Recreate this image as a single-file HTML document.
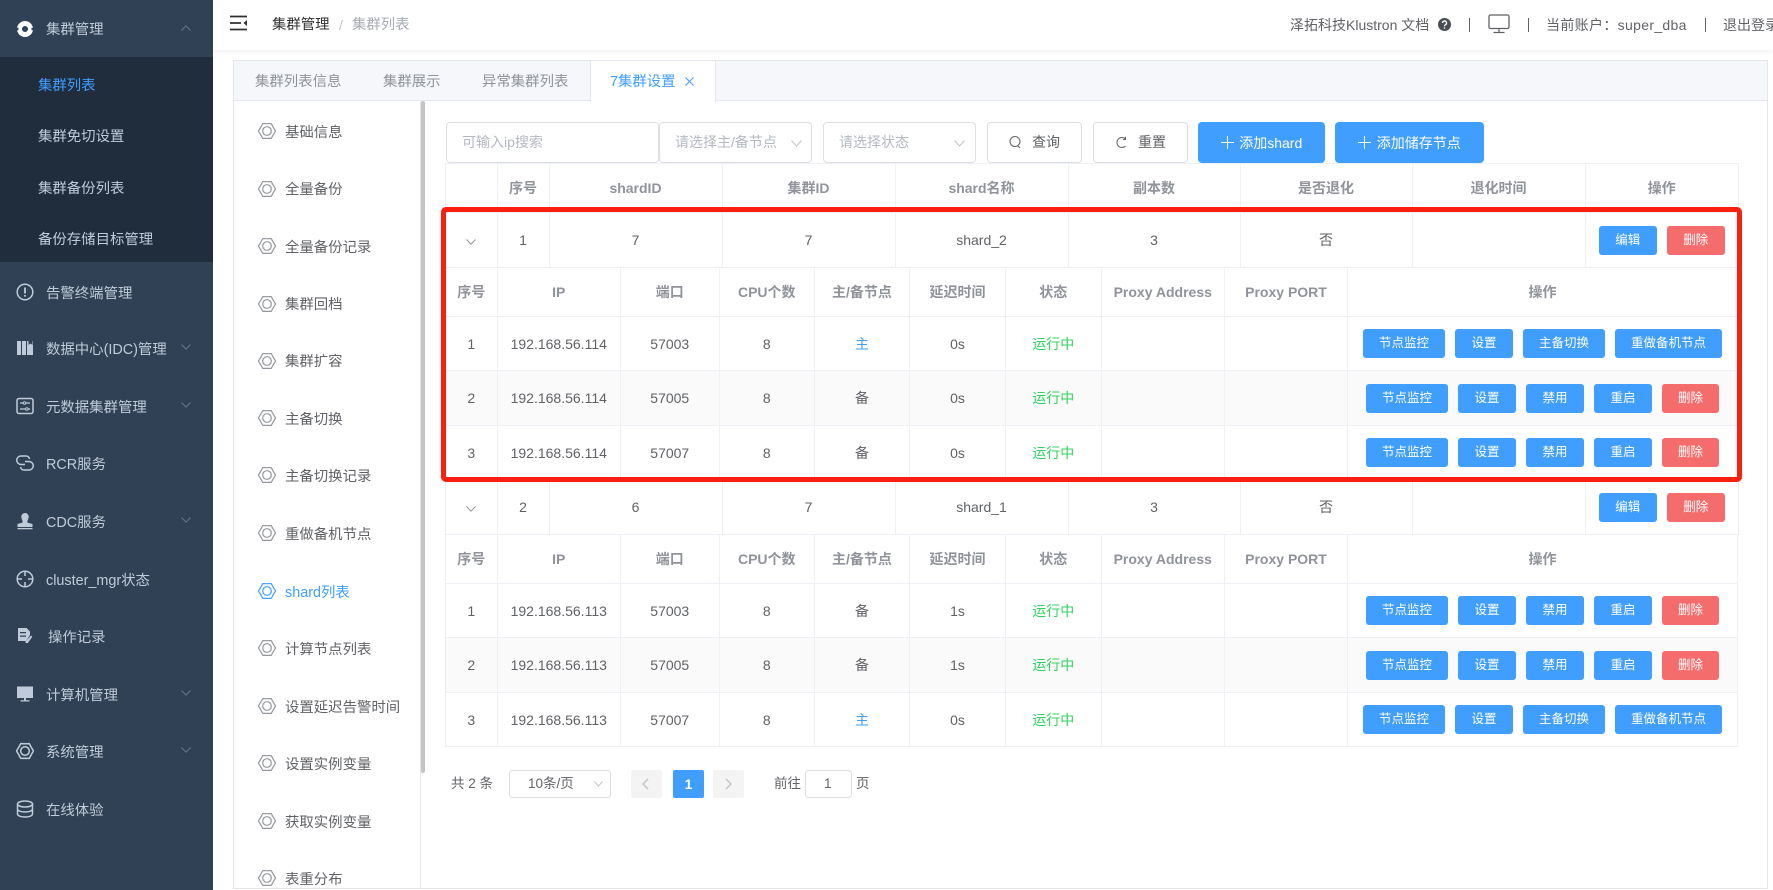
<!DOCTYPE html>
<html lang="zh-CN"><head><meta charset="utf-8"><title>集群列表</title>
<style>
*{box-sizing:border-box}
html{margin:0;padding:0;width:1773px;height:890px;overflow:hidden;background:#fff}
body{margin:0;padding:0;width:1773px;height:890px;overflow:hidden;background:#fff;font-family:"Liberation Sans","Noto Sans CJK SC",sans-serif;color:#606266;filter:blur(.3px)}
.t{position:absolute;white-space:nowrap;line-height:20px;height:20px}
.side{position:absolute;left:0;top:0;width:213px;height:890px;background:#304156}
.sub{position:absolute;left:0;top:57px;width:213px;height:205px;background:#1f2d3d}
.m{color:#bfcbd9;font-size:14.4px;left:46px;margin-top:1.5px}
.s{color:#bfcbd9;font-size:14.4px;left:38px;margin-top:1.5px}
.ic{position:absolute;left:16px;width:18px;height:18px;fill:none;stroke:#bfcbd9;stroke-width:1.5}
.ch{position:absolute;left:181px;width:10px;height:6px;fill:none;stroke:#66778c;stroke-width:1}
.head{position:absolute;left:213px;top:0;width:1560px;height:50px;background:#fff;box-shadow:0 1px 5px rgba(0,21,41,.07)}
.card{position:absolute;left:233px;top:60px;width:1535px;height:829px;border:1px solid #e4e7ed;background:#fff}
.tabbar{position:absolute;left:234px;top:61px;width:1533px;height:40px;background:#f5f7fa;border-bottom:1px solid #e4e7ed}
.tab{font-size:14.4px;color:#909399;top:72px}
.active{position:absolute;left:590px;top:61px;width:126px;height:41px;background:#fff;border-left:1px solid #e4e7ed;border-right:1px solid #e4e7ed}
.l{font-size:14.4px;color:#606266;left:285px;margin-top:1.5px}
.g{position:absolute;left:258px;width:18px;height:18px;fill:none;stroke:#93969c;stroke-width:1.2}
.box{position:absolute;top:122px;height:41px;border:1px solid #dcdfe6;border-radius:4px;background:#fff}
.ph{font-size:14px;color:#b4b8c0;top:132px}
.pb{position:absolute;top:122px;height:41px;border-radius:4px;background:#409eff;color:#fff;font-size:14px;display:flex;align-items:center;justify-content:center;gap:5.5px}
table{position:absolute;left:445px;width:1293px;table-layout:fixed;border-collapse:collapse;font-size:14px;color:#606266;background:#fff}
td{border:1px solid #eef0f5;text-align:center;padding:0;overflow:hidden;white-space:nowrap}
tr.h td{color:#909399;font-weight:bold}
tr.z td{background:#fafafa}
.bs{display:flex;justify-content:center;gap:10px}
.b{height:29px;border-radius:3px;background:#409eff;color:#fff;font-size:12.5px;line-height:29px;text-align:center;width:58px}
.w82{width:82px}.w107{width:107px}.r{background:#f56c6c;width:57px}
.ok{color:#2fd35f}.mas{color:#409eff}
.red{position:absolute;left:440.5px;top:207px;width:1301.5px;height:275px;border:5px solid #fb1f12;border-radius:5px;pointer-events:none}
.pg{font-size:13.5px;color:#606266;top:774px}
.pbtn{position:absolute;top:770px;height:28px;width:31px;background:#f4f4f5;border-radius:2px}
</style></head><body>
<svg width="0" height="0" style="position:absolute"><defs>
<symbol id="gear" viewBox="0 0 18 18"><path d="M17.500 9 15.320 5.350 13.250 1.640 9 1.700 4.750 1.640 2.680 5.350 .5 9 2.680 12.650 4.750 16.360 9 16.300 13.250 16.360 15.320 12.650z" stroke-linejoin="round"/><circle cx="9" cy="9" r="4.300"/></symbol>
</defs></svg>

<div class="side">
<div class="sub"></div>
<svg class="ic" style="top:20px;stroke:none" viewBox="0 0 18 18"><circle cx="9" cy="9" r="8" fill="#fff"/><circle cx="9" cy="9" r="3" fill="#304156"/><path d="M0 9h2.500M15.500 9H18" stroke="#304156" stroke-width="2.500"/></svg>
<div class="t m" style="top:18px">集群管理</div>
<svg class="ch" style="top:25px" viewBox="0 0 10 6"><path d="M.5 5.500 5 .8l4.500 4.700"/></svg>
<div class="t s" style="top:74px;color:#409eff">集群列表</div>
<div class="t s" style="top:125px">集群免切设置</div>
<div class="t s" style="top:177px">集群备份列表</div>
<div class="t s" style="top:228px">备份存储目标管理</div>

<svg class="ic" style="top:283px" viewBox="0 0 18 18"><circle cx="9" cy="9" r="7.800"/><path d="M9 4.500v6M9 12v1.600" stroke-width="1.800"/></svg>
<div class="t m" style="top:282px">告警终端管理</div>

<svg class="ic" style="top:339px;stroke:none;fill:#bfcbd9" viewBox="0 0 18 18"><path d="M1 2h4v14H1zM6 2h4v14H6zM11 2h1.500v4l2-1.500 2 1.500V2H17v14h-6z"/></svg>
<div class="t m" style="top:338px">数据中心(IDC)管理</div>
<svg class="ch" style="top:344px" viewBox="0 0 10 6"><path d="M.5.500 5 5.200 9.500.5"/></svg>

<svg class="ic" style="top:397px" viewBox="0 0 18 18"><rect x="1" y="1.500" width="16" height="15" rx="2"/><path d="M4 6h3M10 6h4M4 12h5M12.500 12H14" stroke-width="1.200"/><circle cx="8.500" cy="6" r="1.300" stroke-width="1"/><circle cx="10.800" cy="12" r="1.300" stroke-width="1"/></svg>
<div class="t m" style="top:396px">元数据集群管理</div>
<svg class="ch" style="top:402px" viewBox="0 0 10 6"><path d="M.5.500 5 5.200 9.500.5"/></svg>

<svg class="ic" style="top:454px" viewBox="0 0 18 18"><path d="M9 10.500H5a3.800 3.800 0 0 1 0-8.500h5a3.600 3.600 0 0 1 3.500 3"/><path d="M9 7.500h4a3.800 3.800 0 0 1 0 8.500H8a3.600 3.600 0 0 1-3.500-3"/></svg>
<div class="t m" style="top:453px">RCR服务</div>

<svg class="ic" style="top:512px;stroke:none;fill:#bfcbd9" viewBox="0 0 18 18"><path d="M9 1a3.700 3.700 0 0 1 3.700 3.700c0 2.300-1.400 3.300-1.400 5.300 0 1 3 1.200 5.200 2V15H1.500v-3c2.200-.8 5.200-1 5.200-2 0-2-1.400-3-1.400-5.300A3.700 3.700 0 0 1 9 1zM1.500 16h15v1.300h-15z"/></svg>
<div class="t m" style="top:511px">CDC服务</div>
<svg class="ch" style="top:517px" viewBox="0 0 10 6"><path d="M.5.500 5 5.200 9.500.5"/></svg>

<svg class="ic" style="top:570px" viewBox="0 0 18 18"><circle cx="9" cy="9" r="7.800"/><path d="M9 1v5M9 12v5M1 9h5M12 9h5"/></svg>
<div class="t m" style="top:569px">cluster_mgr状态</div>

<svg class="ic" style="top:627px;stroke:none;fill:#bfcbd9" viewBox="0 0 18 18"><path d="M2 1h8.500L14 4.500V8l-4 6H2zM4 5v1.300h6V5zM4 8.500v1.300h6V8.500zM15 8.500l1.300 1.200-4.500 6.300H9.500v-1.500z"/></svg>
<div class="t m" style="top:626px;left:48px">操作记录</div>

<svg class="ic" style="top:685px;stroke:none;fill:#bfcbd9" viewBox="0 0 18 18"><path d="M1 1.500h16v11.500H1zM8 13h2v2.300h3.500v1.200h-9v-1.200H8z"/></svg>
<div class="t m" style="top:684px">计算机管理</div>
<svg class="ch" style="top:690px" viewBox="0 0 10 6"><path d="M.5.500 5 5.200 9.500.5"/></svg>

<svg class="ic" style="top:742px" viewBox="0 0 18 18"><use href="#gear"/></svg>
<div class="t m" style="top:741px">系统管理</div>
<svg class="ch" style="top:747px" viewBox="0 0 10 6"><path d="M.5.500 5 5.200 9.500.5"/></svg>

<svg class="ic" style="top:800px" viewBox="0 0 18 18"><ellipse cx="9" cy="4" rx="7.500" ry="3"/><path d="M1.500 4v10c0 1.700 3.400 3 7.500 3s7.500-1.300 7.500-3V4M1.500 9c0 1.700 3.400 3 7.500 3s7.500-1.300 7.500-3"/></svg>
<div class="t m" style="top:799px">在线体验</div>
</div>

<div class="head"></div>
<svg style="position:absolute;left:230px;top:15px" width="18" height="16" viewBox="0 0 18 16" fill="none" stroke="#303133" stroke-width="1.800"><path d="M0 1.500h17M0 8h11M0 14.500h17"/><path d="M17 5 13.500 8l3.500 3z" fill="#303133" stroke="none"/></svg>
<div class="t" style="left:272px;top:15px;font-size:14.4px;color:#303133">集群管理</div>
<div class="t" style="left:339px;top:15px;font-size:14px;color:#c0c4cc">/</div>
<div class="t" style="left:352px;top:15px;font-size:14.4px;color:#a8acb3">集群列表</div>

<div class="t" style="left:1290px;top:15px;font-size:14px;color:#606266">泽拓科技Klustron 文档</div>
<svg style="position:absolute;left:1438px;top:18px" width="13" height="13" viewBox="0 0 13 13"><circle cx="6.500" cy="6.500" r="6.500" fill="#4a4d52"/><path d="M4.500 5a2 2 0 1 1 3 1.700c-.7.400-1 .7-1 1.500" fill="none" stroke="#fff" stroke-width="1.300"/><circle cx="6.500" cy="10" r=".8" fill="#fff"/></svg>
<div style="position:absolute;left:1469px;top:18px;width:1px;height:14px;background:#606266"></div>
<svg style="position:absolute;left:1488px;top:14px" width="22" height="20" viewBox="0 0 22 20" fill="none" stroke="#606266" stroke-width="1.300"><rect x="1" y="1" width="20" height="13.500" rx="1.500"/><path d="M11 14.500V18M5.500 18.500h11"/></svg>
<div style="position:absolute;left:1528px;top:18px;width:1px;height:14px;background:#606266"></div>
<div class="t" style="left:1546px;top:15px;font-size:14px;color:#606266;letter-spacing:.33px">当前账户：super_dba</div>
<div style="position:absolute;left:1705px;top:18px;width:1px;height:14px;background:#606266"></div>
<div class="t" style="left:1723px;top:15px;font-size:14px;color:#606266">退出登录</div>

<div class="card"></div>
<div class="tabbar"></div>
<div class="active"></div>
<div class="t tab" style="left:255px">集群列表信息</div>
<div class="t tab" style="left:383px">集群展示</div>
<div class="t tab" style="left:482px">异常集群列表</div>
<div class="t tab" style="left:610px;color:#409eff">7集群设置</div>
<svg style="position:absolute;left:685px;top:77px" width="9" height="9" viewBox="0 0 9 9" stroke="#409eff" stroke-width="1"><path d="M.5.500l8 8M8.500.500l-8 8"/></svg>

<div style="position:absolute;left:420px;top:101px;width:1px;height:788px;background:#e4e7ed"></div>
<div style="position:absolute;left:421px;top:101px;width:4px;height:672px;background:#c4c4c4;border-radius:2px"></div>

<svg class="g" style="top:122px"><use href="#gear"/></svg><div class="t l" style="top:121px">基础信息</div>
<svg class="g" style="top:180px"><use href="#gear"/></svg><div class="t l" style="top:178px">全量备份</div>
<svg class="g" style="top:237px"><use href="#gear"/></svg><div class="t l" style="top:236px">全量备份记录</div>
<svg class="g" style="top:295px"><use href="#gear"/></svg><div class="t l" style="top:293px">集群回档</div>
<svg class="g" style="top:352px"><use href="#gear"/></svg><div class="t l" style="top:350px">集群扩容</div>
<svg class="g" style="top:409px"><use href="#gear"/></svg><div class="t l" style="top:408px">主备切换</div>
<svg class="g" style="top:466px"><use href="#gear"/></svg><div class="t l" style="top:465px">主备切换记录</div>
<svg class="g" style="top:524px"><use href="#gear"/></svg><div class="t l" style="top:523px">重做备机节点</div>
<svg class="g" style="top:582px;stroke:#409eff"><use href="#gear"/></svg><div class="t l" style="top:581px;color:#409eff">shard列表</div>
<svg class="g" style="top:639px"><use href="#gear"/></svg><div class="t l" style="top:638px">计算节点列表</div>
<svg class="g" style="top:697px"><use href="#gear"/></svg><div class="t l" style="top:696px">设置延迟告警时间</div>
<svg class="g" style="top:754px"><use href="#gear"/></svg><div class="t l" style="top:753px">设置实例变量</div>
<svg class="g" style="top:812px"><use href="#gear"/></svg><div class="t l" style="top:811px">获取实例变量</div>
<svg class="g" style="top:869px"><use href="#gear"/></svg><div class="t l" style="top:868px">表重分布</div>

<div class="box" style="left:446px;width:213px"></div>
<div class="t ph" style="left:462px">可输入ip搜索</div>
<div class="box" style="left:659px;width:153px"></div>
<div class="t ph" style="left:675px">请选择主/备节点</div>
<svg style="position:absolute;left:791px;top:140px" width="11" height="7" viewBox="0 0 11 7" fill="none" stroke="#c0c4cc"><path d="M.5.500 5.500 6l5-5.500"/></svg>
<div class="box" style="left:823px;width:153px"></div>
<div class="t ph" style="left:839px">请选择状态</div>
<svg style="position:absolute;left:954px;top:140px" width="11" height="7" viewBox="0 0 11 7" fill="none" stroke="#c0c4cc"><path d="M.5.500 5.500 6l5-5.500"/></svg>
<div class="box" style="left:987px;width:95px"></div>
<svg style="position:absolute;left:1009px;top:135px" width="13" height="15" viewBox="0 0 13 15" fill="none" stroke="#606266"><circle cx="6" cy="6.500" r="5"/><path d="M9 11l2 2"/></svg>
<div class="t" style="left:1032px;top:132px;font-size:14px">查询</div>
<div class="box" style="left:1093px;width:95px"></div>
<svg style="position:absolute;left:1115px;top:136px" width="12" height="13" viewBox="0 0 12 13" fill="none" stroke="#606266"><path d="M10.500 3A5 5 0 1 0 10.500 10M10.500 .8V3.500H8"/></svg>
<div class="t" style="left:1138px;top:132px;font-size:14px">重置</div>
<div class="pb" style="left:1198px;width:127px"><svg width="13" height="13" viewBox="0 0 13 13" stroke="#fff"><path d="M6.500 0v13M0 6.500h13"/></svg><span>添加shard</span></div>
<div class="pb" style="left:1335px;width:149px"><svg width="13" height="13" viewBox="0 0 13 13" stroke="#fff"><path d="M6.500 0v13M0 6.500h13"/></svg><span>添加储存节点</span></div>

<table style="top:163px"><colgroup><col style="width:51.5px"><col style="width:52px"><col style="width:173px"><col style="width:173px"><col style="width:173px"><col style="width:172px"><col style="width:172px"><col style="width:173px"><col style="width:153.5px"></colgroup>
<tr class="h" style="height:49px"><td></td><td>序号</td><td>shardID</td><td>集群ID</td><td>shard名称</td><td>副本数</td><td>是否退化</td><td>退化时间</td><td>操作</td></tr>
<tr style="height:55px"><td><svg width="10" height="6" viewBox="0 0 10 6" fill="none" stroke="#909399"><path d="M.5.500 5 5.200 9.500.5"/></svg></td><td>1</td><td>7</td><td>7</td><td>shard_2</td><td>3</td><td>否</td><td></td><td><div class="bs"><div class="b">编辑</div><div class="b r" style="width:58px">删除</div></div></td></tr>
</table>

<table style="top:267px"><colgroup><col style="width:51.5px"><col style="width:123.5px"><col style="width:98.5px"><col style="width:95.5px"><col style="width:95px"><col style="width:96px"><col style="width:95.5px"><col style="width:123.5px"><col style="width:123px"><col></colgroup>
<tr class="h" style="height:49px"><td>序号</td><td>IP</td><td>端口</td><td>CPU个数</td><td>主/备节点</td><td>延迟时间</td><td>状态</td><td>Proxy Address</td><td>Proxy PORT</td><td>操作</td></tr>
<tr style="height:54px"><td>1</td><td>192.168.56.114</td><td>57003</td><td>8</td><td class="mas">主</td><td>0s</td><td class="ok">运行中</td><td></td><td></td><td><div class="bs"><div class="b w82">节点监控</div><div class="b">设置</div><div class="b w82">主备切换</div><div class="b w107">重做备机节点</div></div></td></tr>
<tr class="z" style="height:55px"><td>2</td><td>192.168.56.114</td><td>57005</td><td>8</td><td>备</td><td>0s</td><td class="ok">运行中</td><td></td><td></td><td><div class="bs"><div class="b w82">节点监控</div><div class="b">设置</div><div class="b">禁用</div><div class="b">重启</div><div class="b r">删除</div></div></td></tr>
<tr style="height:54px"><td>3</td><td>192.168.56.114</td><td>57007</td><td>8</td><td>备</td><td>0s</td><td class="ok">运行中</td><td></td><td></td><td><div class="bs"><div class="b w82">节点监控</div><div class="b">设置</div><div class="b">禁用</div><div class="b">重启</div><div class="b r">删除</div></div></td></tr>
</table>

<table style="top:479px"><colgroup><col style="width:51.5px"><col style="width:52px"><col style="width:173px"><col style="width:173px"><col style="width:173px"><col style="width:172px"><col style="width:172px"><col style="width:173px"><col style="width:153.5px"></colgroup>
<tr style="height:55px"><td><svg width="10" height="6" viewBox="0 0 10 6" fill="none" stroke="#909399"><path d="M.5.500 5 5.200 9.500.5"/></svg></td><td>2</td><td>6</td><td>7</td><td>shard_1</td><td>3</td><td>否</td><td></td><td><div class="bs"><div class="b">编辑</div><div class="b r" style="width:58px">删除</div></div></td></tr>
</table>

<table style="top:534px"><colgroup><col style="width:51.5px"><col style="width:123.5px"><col style="width:98.5px"><col style="width:95.5px"><col style="width:95px"><col style="width:96px"><col style="width:95.5px"><col style="width:123.5px"><col style="width:123px"><col></colgroup>
<tr class="h" style="height:49px"><td>序号</td><td>IP</td><td>端口</td><td>CPU个数</td><td>主/备节点</td><td>延迟时间</td><td>状态</td><td>Proxy Address</td><td>Proxy PORT</td><td>操作</td></tr>
<tr style="height:54px"><td>1</td><td>192.168.56.113</td><td>57003</td><td>8</td><td>备</td><td>1s</td><td class="ok">运行中</td><td></td><td></td><td><div class="bs"><div class="b w82">节点监控</div><div class="b">设置</div><div class="b">禁用</div><div class="b">重启</div><div class="b r">删除</div></div></td></tr>
<tr class="z" style="height:55px"><td>2</td><td>192.168.56.113</td><td>57005</td><td>8</td><td>备</td><td>1s</td><td class="ok">运行中</td><td></td><td></td><td><div class="bs"><div class="b w82">节点监控</div><div class="b">设置</div><div class="b">禁用</div><div class="b">重启</div><div class="b r">删除</div></div></td></tr>
<tr style="height:54px"><td>3</td><td>192.168.56.113</td><td>57007</td><td>8</td><td class="mas">主</td><td>0s</td><td class="ok">运行中</td><td></td><td></td><td><div class="bs"><div class="b w82">节点监控</div><div class="b">设置</div><div class="b w82">主备切换</div><div class="b w107">重做备机节点</div></div></td></tr>
</table>

<div class="red"></div>

<div class="t pg" style="left:451px">共 2 条</div>
<div class="box" style="left:509px;top:770px;width:102px;height:28px"></div>
<div class="t pg" style="left:528px">10条/页</div>
<svg style="position:absolute;left:594px;top:781px" width="9" height="6" viewBox="0 0 9 6" fill="none" stroke="#c0c4cc"><path d="M.5.500 4.500 5l4-4.500"/></svg>
<div class="pbtn" style="left:631px"></div>
<svg style="position:absolute;left:642px;top:778px" width="7" height="12" viewBox="0 0 7 12" fill="none" stroke="#c0c4cc" stroke-width="1.500"><path d="M6 1 1 6l5 5"/></svg>
<div class="pbtn" style="left:673px;width:31px;background:#409eff;color:#fff;font-size:14px;font-weight:bold;text-align:center;line-height:28px">1</div>
<div class="pbtn" style="left:713px"></div>
<svg style="position:absolute;left:725px;top:778px" width="7" height="12" viewBox="0 0 7 12" fill="none" stroke="#c0c4cc" stroke-width="1.500"><path d="m1 1 5 5-5 5"/></svg>
<div class="t pg" style="left:774px">前往</div>
<div class="box" style="left:805px;top:770px;width:47px;height:28px"></div>
<div class="t pg" style="left:824px">1</div>
<div class="t pg" style="left:856px">页</div>
</body></html>
